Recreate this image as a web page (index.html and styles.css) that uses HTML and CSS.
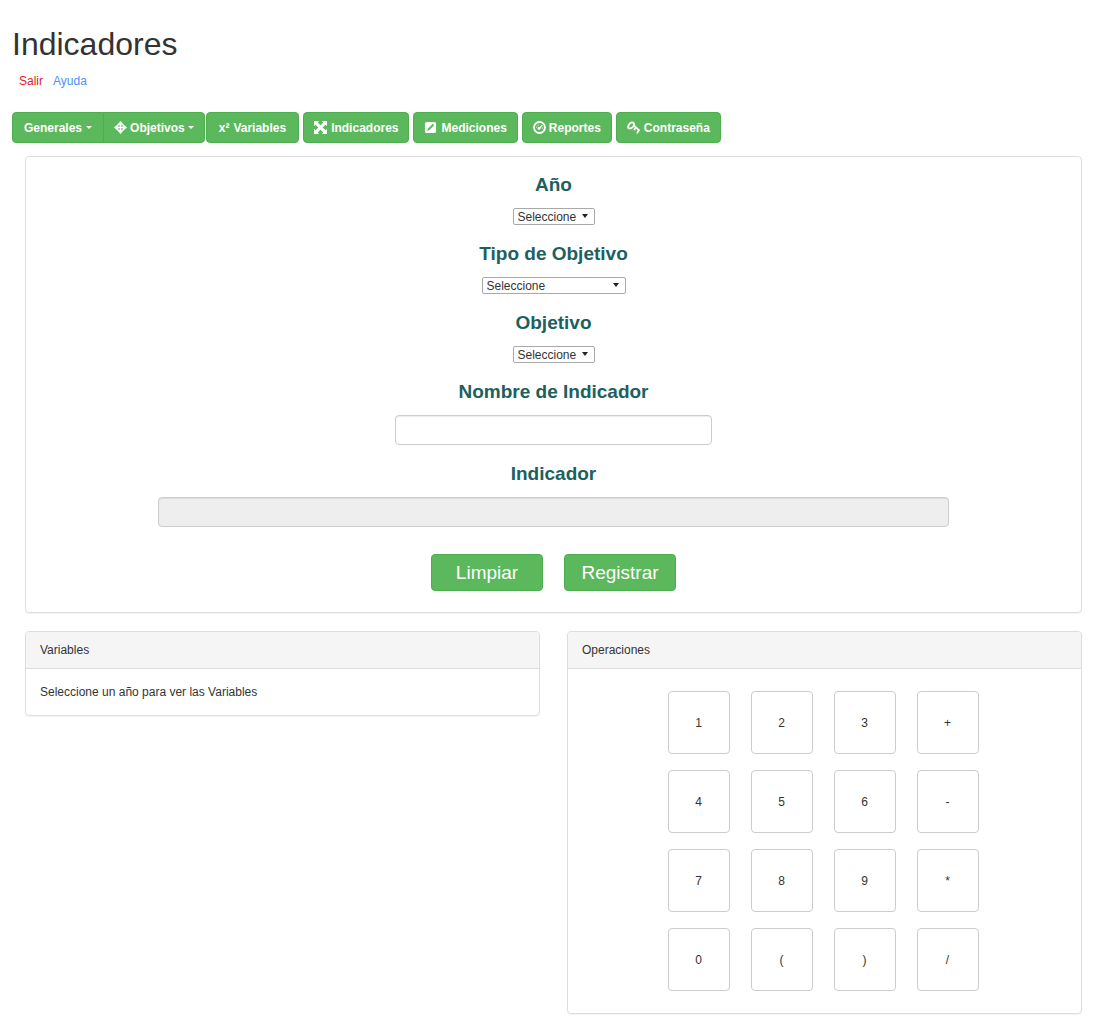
FILE: index.html
```html
<!DOCTYPE html>
<html lang="es">

<head>
    <meta charset="UTF-8">
    <title>Indicadores</title>
    <link rel="stylesheet" href="styles.css">
</head>

<body>
    <h1>Indicadores</h1>
    <div class="session">
        <a href="#" class="salir">Salir</a>
        <a href="#" class="ayuda">Ayuda</a>
    </div>

    <nav class="menu">
        <div class="btn-group">
            <button type="button" class="btn">Generales <span class="caret"></span></button>
            <button type="button" class="btn">
                <svg class="icon" viewBox="0 0 14 14"><path fill-rule="evenodd" d="M7 0l3.200 3.800L14 7l-3.800 3.200L7 14l-3.200-3.800L0 7l3.800-3.200zM4.600 4.600v1.600h1.600V4.600zM7.800 4.600v1.600h1.600V4.600zM4.600 7.800v1.600h1.600V7.800zM7.800 7.800v1.600h1.600V7.800z"/></svg>
                Objetivos <span class="caret"></span>
            </button>
        </div>
        <button type="button" class="btn variables"><span>x²</span> Variables</button>
        <button type="button" class="btn wide">
            <svg class="icon" viewBox="0 0 14 14"><path d="M0 0h5.500L4 1.500 7 4.700l3-3.200L8.500 0H14v5.500L12.500 4 9.300 7l3.200 3L14 8.500V14H8.500l1.500-1.500L7 9.300l-3 3.200L5.500 14H0V8.500L1.500 10l3.200-3-3.200-3L0 5.500z"/></svg>
            Indicadores
        </button>
        <button type="button" class="btn wide">
            <svg class="icon" viewBox="0 0 14 14"><path fill-rule="evenodd" d="M3 1h8a2 2 0 0 1 2 2v8a2 2 0 0 1-2 2H3a2 2 0 0 1-2-2V3a2 2 0 0 1 2-2zM9.500 3L4.200 8.300 3.300 10.700 5.700 9.800 11 4.500z"/></svg>
            Mediciones
        </button>
        <button type="button" class="btn">
            <svg class="icon" viewBox="0 0 14 14"><circle cx="7" cy="7" r="5.900" fill="none" stroke="currentColor" stroke-width="2"/><circle cx="6.500" cy="8" r="1.500"/><path d="M6.500 7L9.800 4l.7.700L7.500 8.500z"/><circle cx="4" cy="6.500" r=".7"/><circle cx="5.500" cy="4.400" r=".7"/><circle cx="10.200" cy="7.500" r=".7"/></svg>
            Reportes
        </button>
        <button type="button" class="btn wide">
            <svg class="icon" viewBox="0 0 14 14"><path d="M1.500 7.500C.5 6 2.500 2 5 1.600 7 1.400 8 3 7.500 5L13 9.800M1.500 7.500C3 8.600 6 7.500 7.500 5M9.200 7.500L8 9.200M12.600 9.800L11.200 12.600" fill="none" stroke="currentColor" stroke-width="2" stroke-linecap="round" stroke-linejoin="round"/></svg>
            Contraseña
        </button>
    </nav>

    <main class="content">
        <form class="panel indicador">
            <label for="anio">Año</label>
            <span class="select">
                <select id="anio"><option>Seleccione</option></select>
            </span>
            <label for="tipo">Tipo de Objetivo</label>
            <span class="select tipo">
                <select id="tipo"><option>Seleccione</option></select>
            </span>
            <label for="objetivo">Objetivo</label>
            <span class="select">
                <select id="objetivo"><option>Seleccione</option></select>
            </span>
            <label for="nombre">Nombre de Indicador</label>
            <input type="text" id="nombre" class="nombre">
            <label for="formula">Indicador</label>
            <input type="text" id="formula" class="formula" disabled>
            <div class="actions">
                <button type="reset" class="btn btn-lg">Limpiar</button>
                <button type="button" class="btn btn-lg">Registrar</button>
            </div>
        </form>

        <div class="columns">
            <section class="panel">
                <div class="panel-heading">Variables</div>
                <div class="panel-body">Seleccione un año para ver las Variables</div>
            </section>
            <section class="panel">
                <div class="panel-heading">Operaciones</div>
                <div class="keypad">
                    <button type="button">1</button>
                    <button type="button">2</button>
                    <button type="button">3</button>
                    <button type="button">+</button>
                    <button type="button">4</button>
                    <button type="button">5</button>
                    <button type="button">6</button>
                    <button type="button">-</button>
                    <button type="button">7</button>
                    <button type="button">8</button>
                    <button type="button">9</button>
                    <button type="button">*</button>
                    <button type="button">0</button>
                    <button type="button">(</button>
                    <button type="button">)</button>
                    <button type="button">/</button>
                </div>
            </section>
        </div>
    </main>
</body>

</html>
```

FILE: styles.css
```css
* {
    box-sizing: border-box;
}

body {
    margin: 0;
    padding: 26px 0 20px 12px;
    font-family: "Liberation Sans", Arial, sans-serif;
    font-size: 12px;
    line-height: 18px;
    color: #333;
    background-color: #fff;
}

h1 {
    margin: 0;
    font-size: 32px;
    font-weight: normal;
    line-height: 36px;
}

button,
input,
select {
    font-family: inherit;
    font-size: 12px;
    color: #333;
}

.session {
    display: flex;
    gap: 10px;
    margin-top: 10px;
    padding-left: 7px;
}

.session a {
    text-decoration: none;
}

.salir {
    color: #e02020;
}

.ayuda {
    color: #4a90ff;
}

.menu {
    display: flex;
    gap: 4px;
    margin-top: 22px;
}

.btn-group {
    display: flex;
    margin-right: -3px;
}

.btn {
    display: flex;
    align-items: center;
    justify-content: center;
    gap: 3px;
    height: 31px;
    padding: 0 10px;
    border: 1px solid #4cae4c;
    border-radius: 4px;
    background-color: #5cb85c;
    color: #fff;
    font-weight: bold;
    cursor: pointer;
}

.btn:hover {
    background-color: #449d44;
}

.btn-group .btn:first-child {
    gap: 4px;
    padding: 0 11px;
    border-radius: 4px 0 0 4px;
}

.btn-group .btn:last-child {
    margin-left: -1px;
    border-radius: 0 4px 4px 0;
}

.wide {
    gap: 4px;
}

.variables {
    gap: 4px;
    padding: 0 12px;
}

.icon {
    width: 13px;
    height: 13px;
    fill: currentColor;
}

.caret {
    border-top: 3px solid #fff;
    border-left: 3px solid transparent;
    border-right: 3px solid transparent;
}

.content {
    padding: 13px 13px 0;
}

.panel {
    border: 1px solid #ddd;
    border-radius: 4px;
    box-shadow: 0 1px 1px rgba(0, 0, 0, 0.05);
}

.indicador {
    display: flex;
    flex-direction: column;
    align-items: center;
    padding: 17px 0 21px;
}

.indicador label {
    margin-bottom: 12px;
    font-size: 19px;
    font-weight: bold;
    line-height: 22px;
    color: #1c6060;
}

.select {
    position: relative;
    width: 82px;
    height: 17px;
    margin-bottom: 18px;
}

.tipo {
    width: 144px;
}

.select select {
    display: block;
    width: 100%;
    height: 17px;
    padding: 0 4px;
    border: 1px solid #a9a9a9;
    border-radius: 2px;
    background-color: #fff;
    appearance: none;
}

.select::after {
    content: "";
    position: absolute;
    top: 6px;
    right: 7px;
    border-top: 4px solid #222;
    border-left: 3px solid transparent;
    border-right: 3px solid transparent;
    pointer-events: none;
}

.indicador input {
    height: 30px;
    padding: 5px 10px;
    border: 1px solid #ccc;
    border-radius: 4px;
    box-shadow: inset 0 1px 1px rgba(0, 0, 0, 0.075);
}

.nombre {
    width: 30%;
    margin-bottom: 18px;
}

.formula {
    width: 75%;
    margin-bottom: 27px;
}

.indicador input:disabled {
    background-color: #eee;
}

.actions {
    display: flex;
    gap: 21px;
}

.btn-lg {
    width: 112px;
    height: 37px;
    font-size: 19px;
    font-weight: normal;
}

.columns {
    display: grid;
    grid-template-columns: 1fr 1fr;
    align-items: start;
    gap: 27px;
    margin-top: 18px;
}

.panel-heading {
    padding: 9px 14px;
    border-bottom: 1px solid #ddd;
    border-radius: 3px 3px 0 0;
    background-color: #f5f5f5;
}

.panel-body {
    padding: 14px;
}

.keypad {
    display: grid;
    grid-template-columns: repeat(4, 62px);
    justify-content: center;
    gap: 16px 21px;
    padding: 22px 3px 22px 0;
}

.keypad button {
    height: 63px;
    padding: 0;
    border: 1px solid #ccc;
    border-radius: 4px;
    background-color: #fff;
    cursor: pointer;
}

.keypad button:hover {
    background-color: #e6e6e6;
}
```
